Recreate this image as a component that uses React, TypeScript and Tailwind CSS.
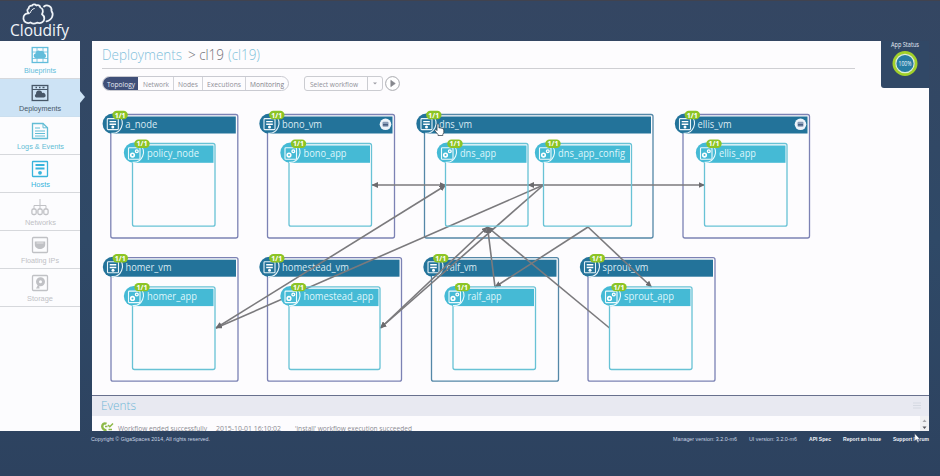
import React from "react";

type IconKind = "blueprints" | "deployments" | "logs" | "hosts" | "networks" | "ips" | "storage";

function SideIcon({ kind }: { kind: IconKind }) {
  return (
    <svg className="shrink-0" width="18" height="18" viewBox="0 0 18 18" fill="none" stroke="currentColor" strokeWidth="1.3">
      {kind === "blueprints" && (
        <>
          <rect x="1.2" y="1.5" width="15.6" height="15" />
          <path d="M1 6h16M1 12.5h16M6 1.5v15M12 1.5v15" strokeWidth="0.8" />
          <path d="M4.5 12a2.3 2.3 0 0 1 0-4.5A3 3 0 0 1 9 5a3.2 3.2 0 0 1 4.5 2.8A2.2 2.2 0 0 1 13.5 12z" fill="currentColor" stroke="none" />
        </>
      )}
      {kind === "deployments" && (
        <>
          <rect x="1.2" y="1.5" width="15.6" height="15" />
          <path d="M1 5.5h16" strokeWidth="1" />
          <path d="M4.5 3.5h1.5M8 3.5h1.5M11.5 3.5h2" strokeWidth="1.5" />
          <path d="M5 13.5a2 2 0 0 1 0-3.6A3.2 3.2 0 0 1 11.3 9 2.3 2.3 0 0 1 13 13.5z" fill="currentColor" stroke="none" />
        </>
      )}
      {kind === "logs" && (
        <>
          <path d="M1.5 1.5h10.5l4.500 4.300v10.700h-15z" />
          <path d="M12 1.5v4.300h4.500" strokeWidth="1" />
          <path d="M4 6h5M4 9h10M4 11.5h10M4 14h10" strokeWidth="1.2" />
        </>
      )}
      {kind === "hosts" && (
        <>
          <rect x="1.5" y="1.5" width="15" height="15" rx="0.5" />
          <path d="M4.5 5h9M4.5 8.500h9" strokeWidth="1.9" />
          <circle cx="9" cy="12.8" r="1.9" fill="currentColor" stroke="none" />
        </>
      )}
      {kind === "networks" && (
        <>
          <path d="M9 1v10M3 11V7.500h12V11" strokeWidth="1" />
          <rect x="0.9" y="11" width="4.3" height="5.5" rx="1.5" />
          <rect x="6.9" y="11" width="4.3" height="5.5" rx="1.5" />
          <rect x="12.8" y="11" width="4.3" height="5.5" rx="1.5" />
        </>
      )}
      {kind === "ips" && (
        <>
          <rect x="1.5" y="1.5" width="15" height="15" rx="1" />
          <path d="M3.8 5.5h10.4v3.300c0 2.500-2.500 4.200-5.200 4.200s-5.200-1.700-5.200-4.200z" fill="currentColor" stroke="none" />
          <path d="M5.500 7h7" stroke="#fff" strokeWidth="0.6" />
        </>
      )}
      {kind === "storage" && (
        <>
          <rect x="1.5" y="1.5" width="15" height="15" rx="1" />
          <circle cx="9.5" cy="7.8" r="3" strokeWidth="3" />
          <path d="M8 9l-3 5.500h3.500z" fill="currentColor" stroke="none" />
        </>
      )}
    </svg>
  );
}

const sideItems: { label: string; kind: IconKind; tone: string; w: number }[] = [
  { label: "Blueprints", kind: "blueprints", tone: "text-[#62bddb]", w: 32 },
  { label: "Deployments", kind: "deployments", tone: "text-[#475768]", w: 42 },
  { label: "Logs & Events", kind: "logs", tone: "text-[#62bdd5]", w: 47 },
  { label: "Hosts", kind: "hosts", tone: "text-[#38b4dc]", w: 19 },
  { label: "Networks", kind: "networks", tone: "text-[#c0c1c5]", w: 31 },
  { label: "Floating IPs", kind: "ips", tone: "text-[#c0c1c5]", w: 38 },
  { label: "Storage", kind: "storage", tone: "text-[#c0c1c5]", w: 26 },
];

/** Single line of text fitted to a fixed advance width. */
function Fit({ children, w, h, size, base, weight = 400 }: { children: string; w: number; h: number; size: number; base: number; weight?: number }) {
  return (
    <svg width={w} height={h} className="block shrink-0 overflow-visible" fill="currentColor">
      <text x="0" y={base} fontSize={size} fontWeight={weight} textLength={w} lengthAdjust="spacingAndGlyphs">
        {children}
      </text>
    </svg>
  );
}

function Sidebar() {
  return (
    <nav className="h-[390px] w-20 shrink-0 bg-[#fcfcfe]">
      {sideItems.map((item, i) => (
        <div
          key={item.label}
          className={`relative flex h-[38px] flex-col items-center border-b pt-[5px] ${item.tone} ${
            i === 1 ? "border-[#cbdfef] bg-[#cde3f5]" : "border-[#d6d8dc]"
          }`}
        >
          <SideIcon kind={item.kind} />
          <div className="mt-[2px] font-['Liberation_Sans',sans-serif]">
            <Fit w={item.w} h={9} size={7} base={7}>{item.label}</Fit>
          </div>
          {i === 1 && (
            <svg className="absolute -right-[4.5px] top-[12px]" width="5" height="12" viewBox="0 0 5 12">
              <path d="M0 0l5 6-5 6z" fill="#cde3f5" />
            </svg>
          )}
        </div>
      ))}
    </nav>
  );
}

function Logo() {
  return (
    <svg className="block" width="80" height="40" viewBox="0 1 80 40">
      <g fill="none" stroke="#eef3f8" strokeWidth="1.8" strokeLinecap="round" strokeLinejoin="round">
        <path d="M29 13.300a4.900 4.900 0 1 0 1.500 9.200c2 1.300 4.500 1.300 6.500.200 4 1.200 7.500-.800 7.300-4.500-.1-2-1.300-3.300-2.300-4 2-3.500.3-6.200-1.700-6.700-.300-2.200-2.500-2.800-4-2-1.300-1.700-3.600-1.200-4.300.2-2-.3-3.500 1-3.300 2.800-2 1-1.700 3.500.3 4.800z" />
        <path d="M44 6.500c3-2.500 8.300-.200 7.500 4.500 2.300 3 1.200 9-5 10.300" />
        <path d="M30.500 12.500c.3-2 1.800-3.600 3.800-4" strokeWidth="1" />
      </g>
      <text x="10" y="35.500" fontSize="15.5" fontFamily="Open Sans, sans-serif" textLength="59" lengthAdjust="spacingAndGlyphs" fill="#f1f5fa">
        Cloudify
      </text>
    </svg>
  );
}

type Box = { name: string; x: number; y: number; w: number; tw: number; minus?: boolean; tealSide?: boolean };

const vms: Box[] = [
  { name: "a_node", x: 110.8, y: 114.5, w: 127, tw: 32 },
  { name: "bono_vm", x: 267.5, y: 114.5, w: 127, tw: 40, minus: true },
  { name: "dns_vm", x: 424.5, y: 114.5, w: 228.5, tw: 33, tealSide: true },
  { name: "ellis_vm", x: 683, y: 114.5, w: 126.5, tw: 34, minus: true },
  { name: "homer_vm", x: 111, y: 257.7, w: 127, tw: 46 },
  { name: "homestead_vm", x: 267.5, y: 257.7, w: 134, tw: 67 },
  { name: "ralf_vm", x: 431.5, y: 257.7, w: 127, tw: 31, tealSide: true },
  { name: "sprout_vm", x: 588, y: 257.7, w: 127, tw: 46 },
];

const apps: Box[] = [
  { name: "policy_node", x: 132.5, y: 143.5, w: 82.5, tw: 52 },
  { name: "bono_app", x: 289, y: 143.5, w: 82.5, tw: 43 },
  { name: "dns_app", x: 445.5, y: 143.5, w: 82.5, tw: 36 },
  { name: "dns_app_config", x: 543.5, y: 143.5, w: 88, tw: 67 },
  { name: "ellis_app", x: 704.5, y: 143.5, w: 82.5, tw: 37 },
  { name: "homer_app", x: 132.5, y: 286.8, w: 82.5, tw: 50 },
  { name: "homestead_app", x: 289, y: 286.8, w: 91, tw: 70 },
  { name: "ralf_app", x: 453, y: 286.8, w: 82.5, tw: 34 },
  { name: "sprout_app", x: 609.5, y: 286.8, w: 82.5, tw: 50 },
];

function Badge({ cx, cy }: { cx: number; cy: number }) {
  return (
    <g>
      <rect x={cx - 7.7} y={cy - 4.2} width="15.4" height="8.4" rx="4.2" fill="#8cc425" />
      <text x={cx} y={cy + 2.5} fontSize="7" fontWeight="700" fill="#fff" textAnchor="middle">1/1</text>
    </g>
  );
}

function VmNode({ b }: { b: Box }) {
  const { x, y, w } = b;
  const cx = x + 2;
  const cy = y + 9.3;
  return (
    <g>
      <rect x={x} y={y} width={w} height="123.5" rx="2" fill="none" stroke={b.tealSide ? "#5487a7" : "#7c82b4"} strokeWidth="1.3" />
      <rect x={x + 1} y={y + 2} width={w - 3} height="17" fill="#23739a" />
      <circle cx={cx} cy={cy} r="10.2" fill="#23739a" />
      <path d={`M${cx + 6} ${cy - 8}a10 10 0 0 1-7.500 17.500`} fill="none" stroke="#e4f2f8" strokeWidth="1.1" />
      <rect x={cx - 5.5} y={cy - 5.2} width="11" height="11" rx="0.8" fill="none" stroke="#e8f3f8" strokeWidth="1.1" />
      <path d={`M${cx - 3.3} ${cy - 2.2}h6.600M${cx - 3.3} ${cy + 0.5}h6.600`} stroke="#fff" strokeWidth="1.400" />
      <circle cx={cx} cy={cy + 3.3} r="1.500" fill="#fff" />
      <text x={x + 14.5} y={y + 13.6} fontSize="11.4" textLength={b.tw} lengthAdjust="spacingAndGlyphs" fill="#d9eaf2">{b.name}</text>
      {b.minus && (
        <g>
          <circle cx={x + w - 9} cy={cy + 0.5} r="5.8" fill="#eef4fa" />
          <rect x={x + w - 12} y={cy - 2} width="6" height="5" rx="1" fill="#8a9db8" />
          <path d={`M${x + w - 11.5} ${cy + 1}h5`} stroke="#41577a" strokeWidth="1.4" />
        </g>
      )}
      <Badge cx={x + 9.3} cy={y + 0.5} />
    </g>
  );
}

function AppNode({ b }: { b: Box }) {
  const { x, y, w } = b;
  const cx = x + 1.5;
  const cy = y + 9.3;
  return (
    <g>
      <rect x={x} y={y} width={w} height="82.7" rx="2" fill="none" stroke="#68c2d5" strokeWidth="1.3" />
      <rect x={x + 1} y={y + 2} width={w - 2.5} height="17.3" fill="#45bad5" />
      <circle cx={cx} cy={cy} r="10.2" fill="#45bad5" />
      <path d={`M${cx + 6} ${cy - 8}a10 10 0 0 1-7.500 17.500`} fill="none" stroke="#e9f9fc" strokeWidth="1.1" />
      <rect x={cx - 5.5} y={cy - 5} width="11.5" height="11.5" rx="0.8" fill="none" stroke="#eefafd" strokeWidth="1.1" />
      <circle cx={cx - 1.5} cy={cy + 2.3} r="1.8" fill="none" stroke="#fff" strokeWidth="1.6" />
      <circle cx={cx + 2.8} cy={cy - 1.6} r="1.4" fill="none" stroke="#fff" strokeWidth="1.3" />
      <text x={x + 14.5} y={y + 13.4} fontSize="11.4" textLength={b.tw} lengthAdjust="spacingAndGlyphs" fill="#dff6fb">{b.name}</text>
      <Badge cx={x + 9.5} cy={y + 0.3} />
    </g>
  );
}

function Topology() {
  return (
    <svg className="block" width="837" height="288" viewBox="92 107 837 288" fontFamily="Open Sans, Noto Sans, sans-serif">
      <defs>
        <marker id="tip" markerUnits="userSpaceOnUse" markerWidth="7" markerHeight="6" refX="6" refY="3" orient="auto-start-reverse">
          <path d="M0 0l6.500 3L0 6z" fill="#6c6b6e" />
        </marker>
      </defs>
      {vms.map((b) => <VmNode key={b.name} b={b} />)}
      <g stroke="#7b7a7d" strokeWidth="1.6" fill="none">
        <path d="M372 185H445.500" markerStart="url(#tip)" markerEnd="url(#tip)" />
        <path d="M445 185H704.500" markerEnd="url(#tip)" />
        <path d="M543.500 185H528" markerEnd="url(#tip)" />
        <path d="M216 328L445.500 185.500" markerStart="url(#tip)" markerEnd="url(#tip)" />
        <path d="M543.500 185L216 328" markerEnd="url(#tip)" />
        <path d="M543.500 185L380.500 328" markerEnd="url(#tip)" />
        <path d="M380.500 328L487.500 227" markerStart="url(#tip)" markerEnd="url(#tip)" />
        <path d="M495 287L487.500 227" markerEnd="url(#tip)" />
        <path d="M588 227L495 287" markerEnd="url(#tip)" />
        <path d="M588 227L651.500 287" markerEnd="url(#tip)" />
        <path d="M609.500 328L487.500 227" markerEnd="url(#tip)" />
      </g>
      {apps.map((b) => <AppNode key={b.name} b={b} />)}
      <g transform="translate(434.500 123.500)" fill="#fff" stroke="#38424e" strokeWidth="0.8" strokeLinejoin="round">
        <path d="M2.500 7V1.300a1 1 0 0 1 2 0V4.500l1-.3 1 .5 1-.1.700.7.800.2.300 1v2.500l-1 2v1H3.500v-1L.5 7.500a.9.900 0 0 1 1.300-1.200z" />
      </g>
    </svg>
  );
}

const tabs = [
  { label: "Topology", w: 28, cell: "w-[35px] bg-[#3f4f78] text-[#e7ebf4] rounded-l-full" },
  { label: "Network", w: 26, cell: "w-[35px] text-[#909098]" },
  { label: "Nodes", w: 20, cell: "w-[29px] text-[#909098] border-l border-[#d2d3d9]" },
  { label: "Executions", w: 34, cell: "w-[43px] text-[#909098] border-l border-[#d2d3d9]" },
  { label: "Monitoring", w: 34, cell: "w-[43px] text-[#808088] border-l border-[#d2d3d9]" },
];

function Toolbar() {
  return (
    <div className="flex h-[15px] items-center pl-[10px]">
      <div className="flex h-[15px] w-[187px] items-stretch rounded-full border border-[#c9cad1]">
        {tabs.map((t) => (
          <div key={t.label} className={`flex items-center justify-center ${t.cell}`}>
            <Fit w={t.w} h={13} size={7.7} base={9.5}>{t.label}</Fit>
          </div>
        ))}
      </div>
      <div className="ml-[15px] flex h-[15px] w-[79px] items-stretch rounded-[3px] border border-[#cbccd1] text-[#909098]">
        <div className="flex w-[62px] items-center pl-[5px]">
          <Fit w={48} h={13} size={7.7} base={9.5}>Select workflow</Fit>
        </div>
        <div className="flex flex-1 items-center justify-center border-l border-[#cbccd1]">
          <svg width="4" height="3" viewBox="0 0 4 3"><path d="M0 .5h4L2 2.500z" fill="#9d9da5" /></svg>
        </div>
      </div>
      <svg className="ml-[2px]" width="15" height="15" viewBox="0 0 15 15">
        <circle cx="7.5" cy="7.5" r="6.9" fill="#fff" stroke="#a7a8ad" strokeWidth="1" />
        <path d="M5.800 4.300l4.500 3.200-4.500 3.200z" fill="#86878d" stroke="#86878d" strokeWidth="0.6" />
      </svg>
    </div>
  );
}

function Header() {
  return (
    <div className="flex h-[47px]">
      <div className="flex-1">
        <div className="ml-[10px] flex h-[28px] w-[753px] items-start border-b border-[#cfcfd3] pt-[4px]">
          <div className="text-[#7fbfdb]"><Fit w={80} h={20} size={14} base={15} weight={300}>Deployments</Fit></div>
          <div className="ml-[6px] text-[#6f6f77]"><Fit w={36} h={20} size={14} base={15} weight={300}>{"> cl19"}</Fit></div>
          <div className="ml-[4px] text-[#7fc2da]"><Fit w={32} h={20} size={14} base={15} weight={300}>(cl19)</Fit></div>
        </div>
      </div>
      <div className="flex w-[48px] flex-col items-center rounded-bl-[3px] bg-[#314866] text-[#e4ebf4]">
        <Fit w={28} h={10} size={6.2} base={6}>App Status</Fit>
        <svg className="block" width="28" height="28" viewBox="0 0 28 28" fontFamily="Open Sans, sans-serif">
          <circle cx="14" cy="12.5" r="11" fill="none" stroke="#a2d02a" strokeWidth="3" />
          <circle cx="14" cy="12.5" r="9.2" fill="#277ca3" stroke="#e0f0d6" strokeWidth="1.2" />
          <text x="7.5" y="14.8" fontSize="6.2" textLength="13" lengthAdjust="spacingAndGlyphs" fill="#eff9ff">100%</text>
        </svg>
      </div>
    </div>
  );
}

function Events() {
  return (
    <section className="h-[36px] overflow-hidden border-t border-[#68708d]">
      <div className="flex h-[20px] items-center justify-between bg-[#e8e9f1] pl-[9px] pr-[6px] text-[#70b7d7]">
        <Fit w={35} h={20} size={12.8} base={14.2} weight={300}>Events</Fit>
        <svg width="10" height="8" viewBox="0 0 10 8" stroke="#d5d9e2" strokeWidth="1"><path d="M0 1h8M0 3.500h8M0 6h8" /></svg>
      </div>
      <div className="flex h-[15px] overflow-hidden bg-[#fdfcfe] text-[#8b8b92]">
        <svg className="ml-[9px] mt-[6px] shrink-0" width="13" height="9" viewBox="0 0 13 9">
          <path d="M5.500 1.800C3 .5 1 2.500 1.300 4.800S4 8.500 5.500 8" fill="none" stroke="#8db947" strokeWidth="2.400" />
          <path d="M4 4.500h2.500M7 3l1.800 1.800L12 1.500M7.500 7.500h3.500" fill="none" stroke="#8db947" strokeWidth="1.500" />
        </svg>
        <div className="ml-[4px]"><Fit w={89} h={14} size={8} base={14.6}>Workflow ended successfully</Fit></div>
        <div className="ml-[9px]"><Fit w={65} h={14} size={8} base={14.6}>2015-10-01 16:10:02</Fit></div>
        <div className="ml-[14px]"><Fit w={117} h={14} size={8} base={14.6}>{"'install' workflow execution succeeded"}</Fit></div>
        <div className="ml-auto w-[9px] bg-[#f0f0f2]">
          <svg width="9" height="15" viewBox="0 0 9 15"><path d="M2.500 6L4.500 3.500 6.500 6z" fill="#a7a7ab" /><path d="M2.500 10.500h4L4.500 13z" fill="#55565c" /></svg>
        </div>
      </div>
    </section>
  );
}

function Footer() {
  return (
    <footer className="relative flex h-[45px] items-start pl-[91px] pr-[11px] pt-[3px] font-['Liberation_Sans',sans-serif] text-[#c9d5e4]">
      <Fit w={119} h={10} size={5.8} base={7.3}>Copyright © GigaSpaces 2014, All rights reserved.</Fit>
      <div className="ml-auto flex">
        <Fit w={64} h={10} size={5.8} base={7.3}>Manager version: 3.2.0-m6</Fit>
        <div className="ml-[12px]"><Fit w={48} h={10} size={5.8} base={7.3}>UI version: 3.2.0-m6</Fit></div>
        <div className="ml-[12px] flex text-[#f0f4fa]">
          <Fit w={22} h={10} size={5.8} base={7.3} weight={700}>API Spec</Fit>
          <div className="ml-[12px]"><Fit w={38} h={10} size={5.8} base={7.3} weight={700}>Report an Issue</Fit></div>
          <div className="ml-[12px]"><Fit w={36} h={10} size={5.8} base={7.3} weight={700}>Support Forum</Fit></div>
        </div>
      </div>
      <svg className="absolute right-[19px] top-[2px]" width="7" height="11" viewBox="0 0 7 11">
        <path d="M.7.500v7.500l1.700-1.500 1.300 3 1.300-.6-1.300-2.700h2.500z" fill="#fff" stroke="#34435b" strokeWidth="0.5" />
      </svg>
    </footer>
  );
}

export default function App() {
  return (
    <div className="h-[476px] w-[940px] overflow-hidden border-t border-[#41434f] bg-linear-to-b from-[#344662] via-[#2f4967] to-[#2d425f] font-['Open_Sans','Noto_Sans',sans-serif]">
      <div className="h-[40px]"><Logo /></div>
      <div className="flex h-[390px]">
        <Sidebar />
        <main className="ml-[12px] flex w-[837px] flex-col bg-[#fdfcfe]">
          <Header />
          <div className="-mt-[12px]"><Toolbar /></div>
          <div className="mt-[16px] h-[288px]"><Topology /></div>
          <Events />
        </main>
      </div>
      <Footer />
    </div>
  );
}
